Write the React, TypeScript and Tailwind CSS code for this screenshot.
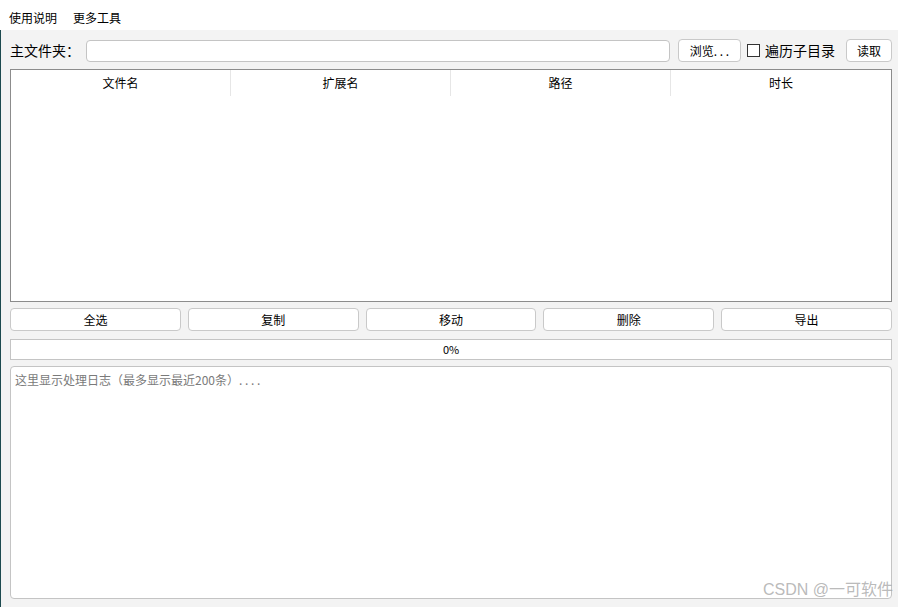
import React from 'react';

const font = { fontFamily: '"Microsoft YaHei", "Noto Sans CJK SC", "Liberation Sans", sans-serif' };

const columns = ['文件名', '扩展名', '路径', '时长'];
const actions = ['全选', '复制', '移动', '删除', '导出'];

// 普通按钮（圆角、浅灰边框）
const Btn: React.FC<{ label: string; className?: string }> = ({ label, className = '' }) => (
  <button
    className={`h-[23px] rounded-[4px] border border-[#c9c9c9] bg-white text-[12px] text-black leading-none ${className}`}
  >
    {label}
  </button>
);

export default function App() {
  return (
    <div className="w-[898px] h-[607px] bg-[#f3f3f3] overflow-hidden relative" style={font}>
      {/* 菜单栏 */}
      <div className="h-[30px] bg-white flex items-center gap-4 px-[9px] pt-[6px] text-[12px] text-black">
        <span>使用说明</span>
        <span>更多工具</span>
      </div>

      <div className="border-l border-[#1d4a4f] h-[577px] flex flex-col pl-[9px] pr-[6px]">
        {/* 主文件夹行 */}
        <div className="flex items-center h-[23px] mt-[9px]">
          <span className="text-[14px] text-black w-[76px] shrink-0">主文件夹：</span>
          <div className="flex-1 h-[22px] rounded-[4px] border border-[#c4c4c4] bg-white" />
          <Btn label="浏览. . ." className="w-[63px] ml-2 text-[#333]" />
          <div className="flex items-center ml-[6px] mr-[11px]">
            <span className="w-[13px] h-[13px] border border-[#333] bg-white" />
            <span className="text-[14px] ml-[5px] text-black">遍历子目录</span>
          </div>
          <Btn label="读取" className="w-[46px]" />
        </div>

        {/* 文件表格 */}
        <div className="mt-[7px] h-[233px] border border-[#8c8c8c] bg-white flex flex-col">
          <div className="grid grid-cols-4 h-[26px]">
            {columns.map((c, i) => (
              <div
                key={c}
                className={`flex items-center justify-center text-[12px] text-black ${i < 3 ? 'border-r border-[#e6e6e6]' : ''}`}
              >
                {c}
              </div>
            ))}
          </div>
        </div>

        {/* 操作按钮 */}
        <div className="grid grid-cols-5 gap-[7px] mt-[6px]">
          {actions.map((a) => (
            <Btn key={a} label={a} className="w-full" />
          ))}
        </div>

        {/* 进度条 */}
        <div className="mt-[8px] h-[21px] border border-[#c4c4c4] bg-white flex items-center justify-center text-[11px] text-black">
          0%
        </div>

        {/* 日志 */}
        <div className="mt-[6px] h-[233px] rounded-[4px] border border-[#c4c4c4] bg-white px-[4px] pt-[4px] text-[12px] text-[#7a7a7a]">
          这里显示处理日志（最多显示最近200条）. . . .
        </div>
      </div>

      <span className="absolute right-[5px] bottom-[5px] text-[16px] text-[#a8a8a8]/80" style={{ fontFamily: '"Liberation Sans", "Noto Sans CJK SC", sans-serif' }}>
        CSDN @一可软件
      </span>
    </div>
  );
}
